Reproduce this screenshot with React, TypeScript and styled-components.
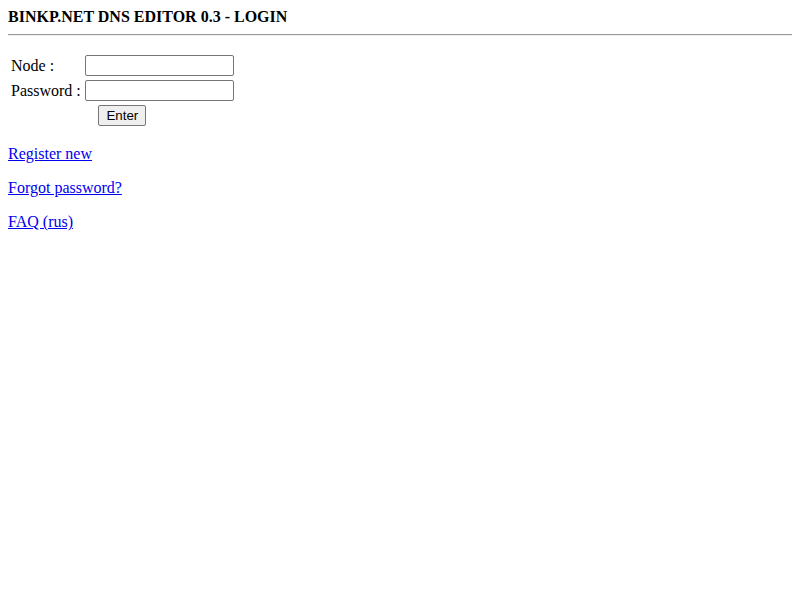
import React from 'react';
import styled, { createGlobalStyle } from 'styled-components';

const GlobalStyle = createGlobalStyle`
  body {
    margin: 8px;
    background: #fff;
    color: #000;
    font-family: "Liberation Serif", "Times New Roman", serif;
    font-size: 16px;
  }
`;

const Title = styled.div`
  font-weight: bold;
  line-height: 18px;
`;

const Rule = styled.hr`
  margin: 8px 0;
  border: 0;
  border-top: 1px solid #9a9a9a;
  border-bottom: 1px solid #eeeeee;
  height: 0;
`;

const LoginForm = styled.form`
  display: inline-grid;
  grid-template-columns: auto auto;
  column-gap: 4px;
  row-gap: 4px;
  align-items: center;
  padding: 11px 3px 3px 3px;
`;

const Label = styled.label`
  line-height: 18px;
`;

const Field = styled.input`
  box-sizing: border-box;
  width: 149px;
  height: 21px;
  margin: 0;
  padding: 1px 2px;
  border: 1px solid #767676;
  border-radius: 2px;
  font: 13.33px "Liberation Sans", Arial, sans-serif;
`;

const Submit = styled.button`
  grid-column: 1 / -1;
  justify-self: center;
  box-sizing: border-box;
  height: 21px;
  margin: 0;
  padding: 1px 7px;
  border: 1px solid #767676;
  border-radius: 2px;
  background: #efefef;
  color: #000;
  font: 13.33px "Liberation Sans", Arial, sans-serif;
`;

const LinkLine = styled.p`
  margin: 16px 0;
  line-height: 18px;
`;

const Link = styled.a`
  color: #0000ee;
  text-decoration: underline;
`;

export default function App() {
  const links = ['Register new', 'Forgot password?', 'FAQ (rus)'];
  return (<>
    <GlobalStyle />
    <Title>BINKP.NET DNS EDITOR 0.3 - LOGIN</Title>
    <Rule />
    <LoginForm onSubmit={e => e.preventDefault()}>
      <Label htmlFor="node">Node :</Label>
      <Field id="node" type="text" />
      <Label htmlFor="password">Password :</Label>
      <Field id="password" type="password" />
      <Submit type="submit">Enter</Submit>
    </LoginForm>
    {links.map(text => <LinkLine key={text}>
      <Link href="#">{text}</Link>
    </LinkLine>)}
  </>);
}
